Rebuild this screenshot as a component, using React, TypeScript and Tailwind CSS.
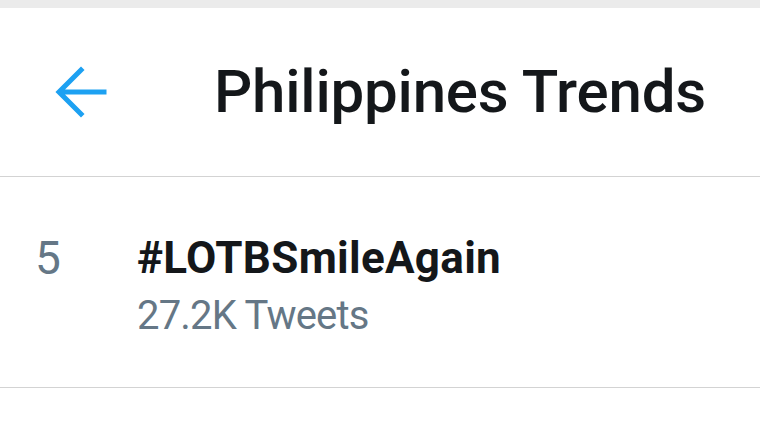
import React from "react";

function BackArrow() {
  return (
    <svg width="52" height="52" viewBox="0 0 52 52" fill="none">
      <path
        d="M49 26H7M26 4L4 26l22 22"
        stroke="#1DA1F2"
        strokeWidth="5"
        strokeLinecap="square"
        strokeLinejoin="miter"
      />
    </svg>
  );
}

export default function App() {
  const trend = { rank: 5, name: "#LOTBSmileAgain", tweets: "27.2K Tweets" };

  return (
    <div
      className="w-[760px] h-[428px] bg-white overflow-hidden"
      style={{ fontFamily: "Roboto, 'Noto Sans', sans-serif" }}
    >
      <div className="h-[8px] bg-[#ebebeb]" />
      <header className="h-[169px] flex items-center border-b border-[#d3d3d3]">
        <div className="w-[214px] flex pl-[55px]">
          <BackArrow />
        </div>
        <h1 className="text-[60px] leading-[70px] font-medium text-[#14171a] tracking-[-0.2px]">
          Philippines Trends
        </h1>
      </header>
      <div className="flex border-b border-[#d3d3d3] pt-[55px] pb-[45px]">
        <div className="w-[137px] pl-[35px] text-[46px] leading-[52px] text-[#657786]">
          {trend.rank}
        </div>
        <div className="flex flex-col gap-[6px]">
          <div className="text-[44px] leading-[52px] font-bold text-[#14171a] tracking-[0.3px]">
            {trend.name}
          </div>
          <div className="text-[40px] leading-[52px] text-[#657786] tracking-[-0.8px]">
            {trend.tweets}
          </div>
        </div>
      </div>
    </div>
  );
}
